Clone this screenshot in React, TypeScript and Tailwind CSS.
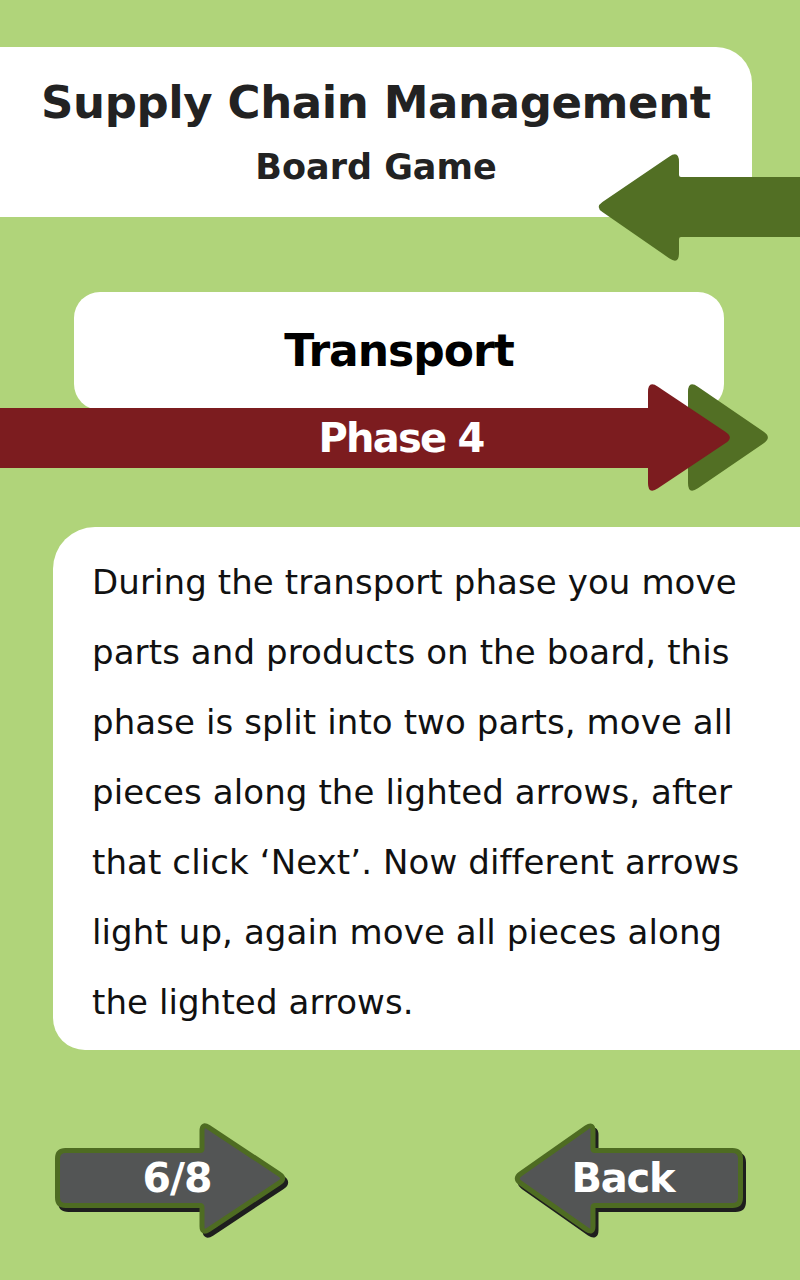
import React from "react";

type Pt = [number, number];

function roundedPath(points: Pt[], radii: number[]): string {
  const n = points.length;
  let d = "";
  for (let i = 0; i < n; i++) {
    const prev = points[(i - 1 + n) % n];
    const cur = points[i];
    const next = points[(i + 1) % n];
    const r = radii[i];
    const v1x = prev[0] - cur[0];
    const v1y = prev[1] - cur[1];
    const l1 = Math.hypot(v1x, v1y);
    const v2x = next[0] - cur[0];
    const v2y = next[1] - cur[1];
    const l2 = Math.hypot(v2x, v2y);
    const a: Pt = [cur[0] + (v1x / l1) * r, cur[1] + (v1y / l1) * r];
    const b: Pt = [cur[0] + (v2x / l2) * r, cur[1] + (v2y / l2) * r];
    d += (i === 0 ? "M" : "L") + a[0].toFixed(2) + " " + a[1].toFixed(2) + " ";
    d += "Q" + cur[0] + " " + cur[1] + " " + b[0].toFixed(2) + " " + b[1].toFixed(2) + " ";
  }
  return d + "Z";
}

const font = { fontFamily: '"DejaVu Sans", "Open Sans", sans-serif' };

function TopArrow() {
  const d = roundedPath(
    [
      [-4, 57],
      [80, 0],
      [80, 27],
      [210, 27],
      [210, 87],
      [80, 87],
      [80, 115],
    ],
    [9, 12, 2, 0, 0, 2, 12]
  );
  return (
    <svg className="absolute left-[597px] top-[150px]" width="203" height="116" viewBox="0 0 203 116">
      <path d={d} fill="#526f24" transform="translate(2 0)" />
    </svg>
  );
}

function PhaseHeads() {
  const green = roundedPath(
    [
      [48, 2],
      [132, 59.5],
      [48, 117],
    ],
    [12, 10, 12]
  );
  const red = roundedPath(
    [
      [8, 2],
      [94, 59.5],
      [8, 117],
    ],
    [12, 10, 12]
  );
  return (
    <svg className="absolute left-[640px] top-[-30px]" width="140" height="120" viewBox="0 0 140 120">
      <path d={green} fill="#526f24" />
      <path d={red} fill="#7c1c1f" />
    </svg>
  );
}

function NavButton({ dir, label }: { dir: "right" | "left"; label: string }) {
  const rightPts: Pt[] = [
    [7.5, 35.5],
    [152, 35.5],
    [152, 8],
    [236, 63.5],
    [152, 119],
    [152, 90.5],
    [7.5, 90.5],
  ];
  const leftPts: Pt[] = [
    [235.5, 35.5],
    [235.5, 90.5],
    [88, 90.5],
    [88, 119],
    [9, 63.5],
    [88, 8],
    [88, 35.5],
  ];
  const pts = dir === "right" ? rightPts : leftPts;
  const radii = dir === "right" ? [8, 2, 8, 8, 8, 2, 8] : [8, 8, 2, 8, 8, 8, 2];
  const d = roundedPath(pts, radii);
  return (
    <div className="relative w-[250px] h-[130px]">
      <svg className="absolute inset-0" width="250" height="130" viewBox="0 0 250 130">
        <path d={d} fill="#1e1e1e" stroke="#1e1e1e" strokeWidth="5" strokeLinejoin="round" transform="translate(3 4)" />
        <path d={d} fill="#535555" stroke="#4e6c22" strokeWidth="5" strokeLinejoin="round" />
      </svg>
      <div
        className={
          "absolute top-[33px] text-white font-bold leading-[60px] " +
          (dir === "right"
            ? "left-[62px] w-[130px] text-center text-[41px] tracking-[-1px]"
            : "left-[58px] w-[120px] text-center text-[40px] tracking-[-1.2px]")
        }
        style={font}
      >
        {label}
      </div>
    </div>
  );
}

export default function App() {
  return (
    <div className="relative w-[800px] h-[1280px] bg-[#b0d47a] overflow-hidden" style={font}>
      <div className="pt-[47px]">
        <div className="w-[752px] h-[170px] bg-white rounded-tr-[36px] flex flex-col items-center pt-[26px]">
          <div className="text-[#222] font-bold text-[45px] leading-[60px] tracking-[-0.4px]">Supply Chain Management</div>
          <div className="text-[#222] font-bold text-[35px] leading-[44px] mt-[12px]">Board Game</div>
        </div>
      </div>
      <TopArrow />

      <div className="mt-[75px]">
        <div className="ml-[74px] w-[650px] h-[118px] bg-white rounded-[26px] flex justify-center pt-[30px]">
          <div className="text-black font-bold text-[44px] leading-[58px] tracking-[-1px]">Transport</div>
        </div>
        <div className="relative h-[60px] mt-[-2px]">
          <div className="w-[652px] h-[60px] bg-[#7c1c1f] pl-[150px] flex justify-center items-center">
            <div className="text-white font-bold text-[40px] leading-[56px] tracking-[-1.8px]">Phase 4</div>
          </div>
          <PhaseHeads />
        </div>
      </div>

      <div className="mt-[59px] ml-[53px] w-[747px] h-[523px] bg-white rounded-tl-[42px] rounded-bl-[32px] pl-[39px] pt-[20px]">
        <p className="text-[#111] text-[34px] leading-[70px] tracking-[0.1px]">
          During the transport phase you move
          <br />
          parts and products on the board, this
          <br />
          phase is split into two parts, move all
          <br />
          pieces along the lighted arrows, after
          <br />
          that click ‘Next’. Now different arrows
          <br />
          light up, again move all pieces along
          <br />
          the lighted arrows.
        </p>
      </div>

      <div className="mt-[65px] flex pl-[50px]">
        <NavButton dir="right" label="6/8" />
        <div className="ml-auto mr-[45px]">
          <NavButton dir="left" label="Back" />
        </div>
      </div>
    </div>
  );
}
